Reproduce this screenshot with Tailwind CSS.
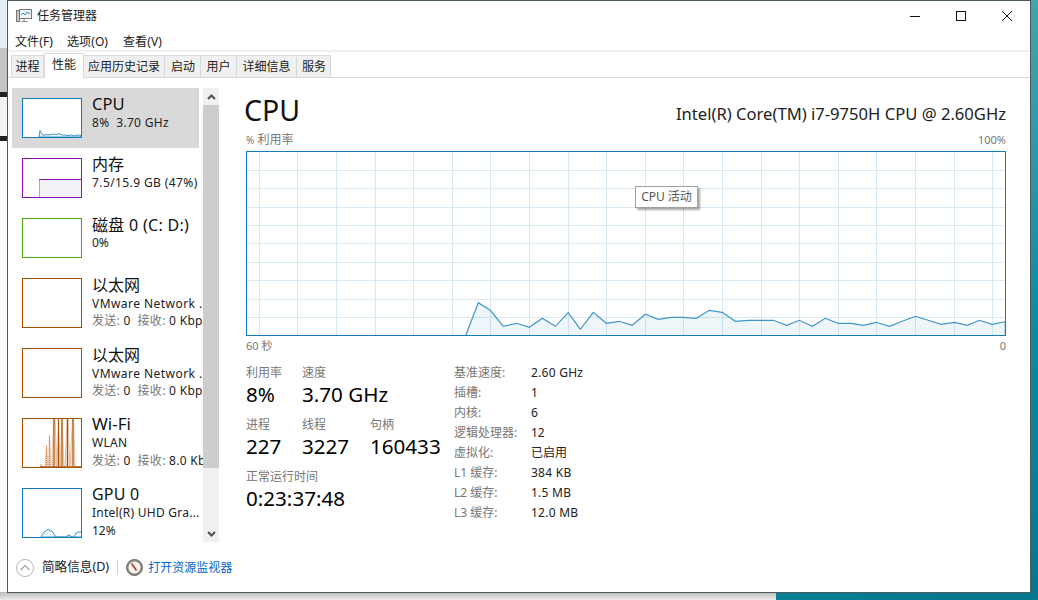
<!DOCTYPE html>
<html lang="zh-CN">
<head>
  <meta charset="UTF-8" />
  <title>任务管理器</title>
  <script src="https://cdn.jsdelivr.net/npm/@tailwindcss/browser@4"></script>
</head>
<body class="relative w-[1038px] h-[600px] overflow-hidden bg-[#f4f4f4] text-black font-['Noto_Sans','Noto_Sans_CJK_SC',sans-serif]">

  <!-- Desktop behind the window -->
  <div class="absolute left-0 top-0 w-[8px] h-[48px] bg-[#e4eef5]"></div>
  <div class="absolute left-0 top-[48px] w-[8px] h-[44px] bg-[#c4c4c4]"></div>
  <div class="absolute left-0 top-[92px] w-[8px] h-[5px] bg-[#222]"></div>
  <div class="absolute left-0 top-[136px] w-[8px] h-[5px] bg-[#222]"></div>
  <div class="absolute left-0 top-[141px] w-[8px] h-[459px] bg-[#fafafa]"></div>
  <div class="absolute left-0 top-[592px] w-[776px] h-[8px] bg-gradient-to-b from-[#b8b8b8] to-[#ececec]"></div>
  <div class="absolute left-[776px] top-[592px] w-[262px] h-[8px] bg-gradient-to-r from-[#0a7f95] to-[#04758d]"></div>
  <div class="absolute left-[1031px] top-0 w-[7px] h-[600px] bg-gradient-to-b from-[#3fa6ad] via-[#0d8ea2] to-[#05778f]"></div>

  <!-- Task manager window -->
  <div class="absolute left-[7px] top-0 w-[1024px] h-[593px] bg-white border border-[#4a5a60] flex flex-col">

    <!-- Title bar -->
    <div class="h-[30px] flex items-center shrink-0">
      <svg class="ml-[8px]" width="16" height="16" viewBox="0 0 16 16">
        <rect x="0.5" y="2.5" width="3" height="11" fill="#c8c8c8" stroke="#7a7a7a" />
        <rect x="3.5" y="1.5" width="12" height="9" fill="#eef4f8" stroke="#777" />
        <path d="M5 7l2-2 2 2 2-3 3 2" fill="none" stroke="#3a8fc4" />
        <path d="M8 11v2M5.5 13.5h6" stroke="#888" fill="none" />
      </svg>
      <span class="ml-[5px] text-[12px] text-[#222]">任务管理器</span>
      <div class="ml-auto flex items-center h-full">
        <div class="w-[46px] h-full flex items-center justify-center">
          <svg width="10" height="10" viewBox="0 0 10 10"><path d="M0 5.5h10" stroke="#111" /></svg>
        </div>
        <div class="w-[46px] h-full flex items-center justify-center">
          <svg width="10" height="10" viewBox="0 0 10 10"><rect x="0.5" y="0.5" width="9" height="9" fill="none" stroke="#111" /></svg>
        </div>
        <div class="w-[46px] h-full flex items-center justify-center">
          <svg width="10" height="10" viewBox="0 0 10 10"><path d="M0 0l10 10M10 0L0 10" stroke="#111" /></svg>
        </div>
      </div>
    </div>

    <!-- Menu -->
    <div class="h-[19px] shrink-0 flex items-center pl-[7px] pt-[2px] text-[12px] text-[#1a1a1a] leading-none">
      <span class="w-[52px] tracking-[0.1px]">文件(F)</span>
      <span class="w-[56px] tracking-[0.1px]">选项(O)</span>
      <span class="tracking-[0.1px]">查看(V)</span>
    </div>

    <!-- Tabs -->
    <div class="h-[2px] bg-[#f0f0f0] shrink-0"></div>
    <div class="h-[26px] shrink-0 flex items-end pl-[3px] border-b border-[#d9d9d9] text-[12px] text-[#222]">
      <div class="w-[33px] h-[22px] flex items-center justify-center bg-[#f0f0f0] border border-b-0 border-[#d9d9d9]">进程</div>
      <div class="w-[40px] h-[25px] -mb-px flex items-center justify-center bg-white border border-b-0 border-[#d9d9d9] relative pb-[2px]">性能</div>
      <div class="w-[81px] h-[22px] flex items-center justify-center bg-[#f0f0f0] border border-b-0 border-l-0 border-[#d9d9d9]">应用历史记录</div>
      <div class="w-[36px] h-[22px] flex items-center justify-center bg-[#f0f0f0] border border-b-0 border-l-0 border-[#d9d9d9] pl-[1px]">启动</div>
      <div class="w-[36px] h-[22px] flex items-center justify-center bg-[#f0f0f0] border border-b-0 border-l-0 border-[#d9d9d9]">用户</div>
      <div class="w-[60px] h-[22px] flex items-center justify-center bg-[#f0f0f0] border border-b-0 border-l-0 border-[#d9d9d9]">详细信息</div>
      <div class="w-[34px] h-[22px] flex items-center justify-center bg-[#f0f0f0] border border-b-0 border-l-0 border-[#d9d9d9] pl-[1px]">服务</div>
    </div>

    <!-- Body -->
    <div class="flex h-[470px] shrink-0 pt-[10px] pl-[4px]">

      <!-- Resource list -->
      <div class="w-[191px] h-[454px] overflow-hidden shrink-0 whitespace-nowrap">
        <div class="w-[187px] h-[60px] bg-[#d9d9d9] flex gap-[10px] py-[10px] pl-[10px]">
          <div class="w-[60px] h-[40px] shrink-0 bg-white border border-[#117dbb]">
            <svg width="58" height="38" viewBox="1 1 58 38"><path d="M17 39L18 32.5 20 36.5 22 37.5 24 36.5 26 37 29 36.5 32 36 35 36.5 37 35.5 40 37 43 37 46 37.5 49 37 52 38 55 37 59 37.5V39Z" fill="#ecf5fa" stroke="#3f97c9" /></svg>
          </div>
          <div>
            <div class="text-[16.5px] leading-[20px] -mt-[4px] text-[#111]">CPU</div>
            <div class="text-[12px] tracking-[0.3px] leading-[18px] text-[#222]">8%&nbsp; 3.70 GHz</div>
          </div>
        </div>

        <div class="w-[187px] h-[60px] flex gap-[10px] py-[10px] pl-[10px]">
          <div class="w-[60px] h-[40px] shrink-0 bg-white border border-[#8b12ae]">
            <svg width="58" height="38" viewBox="1 1 58 38">
              <path d="M17.5 39V21.5H60V39Z" fill="#f4f2f6" />
              <path d="M17.5 39V21.5" fill="none" stroke="#c896dc" />
              <path d="M17 21.5H60" fill="none" stroke="#8b12ae" />
            </svg>
          </div>
          <div>
            <div class="text-[16px] leading-[20px] -mt-[4px] text-[#111]">内存</div>
            <div class="text-[12px] tracking-[0.4px] leading-[18px] text-[#222]">7.5/15.9 GB (47%)</div>
          </div>
        </div>

        <div class="w-[187px] h-[60px] flex gap-[10px] py-[10px] pl-[10px]">
          <div class="w-[60px] h-[40px] shrink-0 bg-white border border-[#4da60c]"></div>
          <div>
            <div class="text-[16px] tracking-[0.3px] leading-[20px] -mt-[3px] text-[#111]">磁盘 0 (C: D:)</div>
            <div class="text-[12px] leading-[18px] -mt-px text-[#222]">0%</div>
          </div>
        </div>

        <div class="w-[187px] h-[70px] flex gap-[10px] py-[10px] pl-[10px]">
          <div class="w-[60px] h-[50px] shrink-0 bg-white border border-[#a74f01]"></div>
          <div>
            <div class="text-[16px] leading-[20px] -mt-[3px] text-[#111]">以太网</div>
            <div class="text-[12px] tracking-[0.45px] leading-[18px] text-[#222]">VMware Network ...</div>
            <div class="text-[12px] tracking-[0.3px] leading-[18px] -mt-px text-[#222]"><span class="text-[#777]">发送:</span> 0&nbsp; <span class="text-[#777]">接收:</span> 0 Kbps</div>
          </div>
        </div>

        <div class="w-[187px] h-[70px] flex gap-[10px] py-[10px] pl-[10px]">
          <div class="w-[60px] h-[50px] shrink-0 bg-white border border-[#a74f01]"></div>
          <div>
            <div class="text-[16px] leading-[20px] -mt-[3px] text-[#111]">以太网</div>
            <div class="text-[12px] tracking-[0.45px] leading-[18px] text-[#222]">VMware Network ...</div>
            <div class="text-[12px] tracking-[0.3px] leading-[18px] -mt-px text-[#222]"><span class="text-[#777]">发送:</span> 0&nbsp; <span class="text-[#777]">接收:</span> 0 Kbps</div>
          </div>
        </div>

        <div class="w-[187px] h-[70px] flex gap-[10px] py-[10px] pl-[10px]">
          <div class="w-[60px] h-[50px] shrink-0 bg-white border border-[#a74f01]">
            <svg width="58" height="48" viewBox="1 1 58 48">
              <path d="M18 49L19 46 20 49H23L24.5 28 26 49H26.5L27.5 17 29 49H30L31.5 1H33L35 49 36.5 1 38 49 40 1 42 49H43L45 1H46L48 49 50.5 1H51.5L53 46 54 49H60" fill="#f3dfcd" stroke="#e3b48e" stroke-width="0.8" />
              <path d="M24.5 49V28M27.5 49V17" fill="none" stroke="#c8733a" stroke-dasharray="1 1" />
              <path d="M32 49V1M36.5 49V1M40 49V1M45.5 49V1M51 49V1" fill="none" stroke="#a74f01" stroke-width="1.1" />
              <path d="M18 48.5H60" fill="none" stroke="#c07a44" />
            </svg>
          </div>
          <div>
            <div class="text-[17px] leading-[20px] -mt-[4px] text-[#111]">Wi-Fi</div>
            <div class="text-[12px] tracking-[0.3px] leading-[18px] text-[#222]">WLAN</div>
            <div class="text-[12px] tracking-[0.3px] leading-[18px] text-[#222]"><span class="text-[#777]">发送:</span> 0&nbsp; <span class="text-[#777]">接收:</span> 8.0 Kbps</div>
          </div>
        </div>

        <div class="w-[187px] h-[70px] flex gap-[10px] py-[10px] pl-[10px]">
          <div class="w-[60px] h-[50px] shrink-0 bg-white border border-[#117dbb]">
            <svg width="58" height="48" viewBox="1 1 58 48"><path d="M19 49L22 44 24 43 26 41 28 43 30 43 32 46 34 49H44L46 47 48 47.5 50 49H52L54 45 56 44H60V49Z" fill="#f4f9fc" stroke="#3f97c9" /></svg>
          </div>
          <div>
            <div class="text-[16px] tracking-[0.2px] leading-[20px] -mt-[4px] text-[#111]">GPU 0</div>
            <div class="text-[12px] tracking-[0.25px] leading-[18px] text-[#222]">Intel(R) UHD Gra...</div>
            <div class="text-[12px] leading-[18px] text-[#222]">12%</div>
          </div>
        </div>
      </div>

      <!-- Scrollbar -->
      <div class="w-[16px] h-[454px] bg-[#f0f0f0] shrink-0 flex flex-col">
        <div class="h-[17px] flex items-center justify-center">
          <svg width="9" height="6" viewBox="0 0 9 6"><path d="M1 5l3.5-3.5L8 5" fill="none" stroke="#505050" stroke-width="2" /></svg>
        </div>
        <div class="h-[363px] bg-[#cdcdcd]"></div>
        <div class="mt-auto h-[17px] flex items-center justify-center">
          <svg width="9" height="6" viewBox="0 0 9 6"><path d="M1 1l3.5 3.5L8 1" fill="none" stroke="#505050" stroke-width="2" /></svg>
        </div>
      </div>

      <!-- Detail pane -->
      <div class="ml-[27px] w-[760px] shrink-0">
        <div class="flex items-end justify-between h-[44px]">
          <div class="text-[28.5px] leading-[44px] -ml-[2px] text-[#111]">CPU</div>
          <div class="text-[16.6px] leading-[30px] mb-[3px] text-[#222]">Intel(R) Core(TM) i7-9750H CPU @ 2.60GHz</div>
        </div>
        <div class="flex justify-between items-center leading-[16px] text-[#777]">
          <span class="text-[12px]"><span class="text-[10px]">%</span> 利用率</span>
          <span class="text-[11px]">100%</span>
        </div>

        <div class="relative w-[760px] h-[185px] mt-[3px] border border-[#117dbb] bg-white">
          <svg class="block" width="758" height="183" viewBox="247 152 758 183">
            <path shape-rendering="crispEdges" fill="none" stroke="#d9e9f3" d="M259.5 152V335M297.5 152V335M336.5 152V335M375.5 152V335M413.5 152V335M452.5 152V335M490.5 152V335M529.5 152V335M568.5 152V335M606.5 152V335M645.5 152V335M683.5 152V335M722.5 152V335M761.5 152V335M799.5 152V335M838.5 152V335M876.5 152V335M915.5 152V335M954.5 152V335M992.5 152V335M247 170.5H1005M247 188.5H1005M247 207.5H1005M247 225.5H1005M247 243.5H1005M247 262.5H1005M247 280.5H1005M247 299.5H1005M247 317.5H1005" />
            <path fill="#117dbb" fill-opacity="0.07" stroke="#3f97c9" stroke-width="1.2" d="M465.7 335.5L478.3 302.7 490.3 310.3 503.3 326.3 516.7 323.3 529.3 327.3 542.3 318.3 555.3 326.3 568.3 312.7 580.3 329.3 593.3 312.3 606.3 323.3 619.3 321.3 632.3 325.3 645.3 314.3 658.3 319.3 671.3 317.3 683.3 317.3 696.3 318.3 709.3 310.3 722.3 312.3 735.3 321.3 748.3 320.3 773.3 320.3 786.7 325.3 799.3 320.3 812.3 326.3 825.3 318.3 838.3 323.3 851.3 323.3 863.3 325.3 876.3 322.3 889.3 326.3 902.3 321.3 915.3 316.3 928.3 320.3 941.3 324.3 954.3 322.3 967.3 325.3 979.3 320.3 992.3 324.3 1005.3 321.7V335.5Z" />
          </svg>
          <!-- Tooltip over the graph -->
          <div class="absolute left-[388px] top-[34px] w-[63px] h-[22px] bg-white border border-[#a0a0a0] shadow-[2px_2px_2px_rgba(0,0,0,0.35)] flex items-center justify-center text-[12px] text-[#575757]">CPU 活动</div>
        </div>

        <div class="flex justify-between text-[11px] leading-[16px] mt-[2px] text-[#777]">
          <span>60 秒</span>
          <span>0</span>
        </div>

        <div class="flex mt-[11px]">
          <!-- Dynamic counters -->
          <div class="w-[208px] shrink-0">
            <div class="flex">
              <div class="w-[56px]">
                <div class="text-[12px] leading-[16px] text-[#777]">利用率</div>
                <div class="text-[20.6px] leading-[30px] -mt-[2px]">8%</div>
              </div>
              <div>
                <div class="text-[12px] leading-[16px] text-[#777]">速度</div>
                <div class="text-[20.6px] leading-[30px] -mt-[2px]">3.70 GHz</div>
              </div>
            </div>
            <div class="flex mt-[8px]">
              <div class="w-[56px]">
                <div class="text-[12px] leading-[16px] text-[#777]">进程</div>
                <div class="text-[20.6px] leading-[30px] -mt-[2px]">227</div>
              </div>
              <div class="w-[68px]">
                <div class="text-[12px] leading-[16px] text-[#777]">线程</div>
                <div class="text-[20.6px] leading-[30px] -mt-[2px]">3227</div>
              </div>
              <div>
                <div class="text-[12px] leading-[16px] text-[#777]">句柄</div>
                <div class="text-[20.6px] leading-[30px] -mt-[2px]">160433</div>
              </div>
            </div>
            <div class="mt-[8px]">
              <div class="text-[12px] leading-[16px] text-[#777]">正常运行时间</div>
              <div class="text-[20.6px] leading-[28px] -mt-px">0:23:37:48</div>
            </div>
          </div>

          <!-- Static specs -->
          <div class="grid grid-cols-[77px_auto] auto-rows-[20px] items-center text-[12px] text-[#222] -mt-[2px]">
            <span class="text-[#777]">基准速度:</span><span class="tracking-[0.25px]">2.60 GHz</span>
            <span class="text-[#777]">插槽:</span><span>1</span>
            <span class="text-[#777]">内核:</span><span>6</span>
            <span class="text-[#777]">逻辑处理器:</span><span>12</span>
            <span class="text-[#777]">虚拟化:</span><span>已启用</span>
            <span class="text-[#777]">L1 缓存:</span><span class="tracking-[0.25px]">384 KB</span>
            <span class="text-[#777]">L2 缓存:</span><span class="tracking-[0.25px]">1.5 MB</span>
            <span class="text-[#777]">L3 缓存:</span><span class="tracking-[0.25px]">12.0 MB</span>
          </div>
        </div>
      </div>
    </div>

    <!-- Footer -->
    <div class="flex-1 flex items-center pl-[8px] pb-[5px]">
      <svg width="18" height="18" viewBox="0 0 18 18">
        <circle cx="9" cy="9" r="8.5" fill="#fff" stroke="#b5b5b5" />
        <path d="M4.5 11L9 6.5 13.5 11" fill="none" stroke="#a8a8a8" stroke-width="1.3" />
      </svg>
      <span class="ml-[8px] text-[12.6px] text-[#222]">简略信息(D)</span>
      <div class="ml-[8px] w-px h-[15px] bg-[#d0d0d0]"></div>
      <svg class="ml-[8px]" width="17" height="17" viewBox="0 0 17 17">
        <circle cx="8.5" cy="8.5" r="8" fill="#8f8a82" stroke="#6e6a64" />
        <circle cx="8.5" cy="8.5" r="6" fill="#f8f6f2" />
        <path d="M5.5 4.5L10.5 11.5" stroke="#c03028" stroke-width="1.6" />
      </svg>
      <span class="ml-[5px] text-[12px] text-[#0066cc]">打开资源监视器</span>
    </div>
  </div>
</body>
</html>
